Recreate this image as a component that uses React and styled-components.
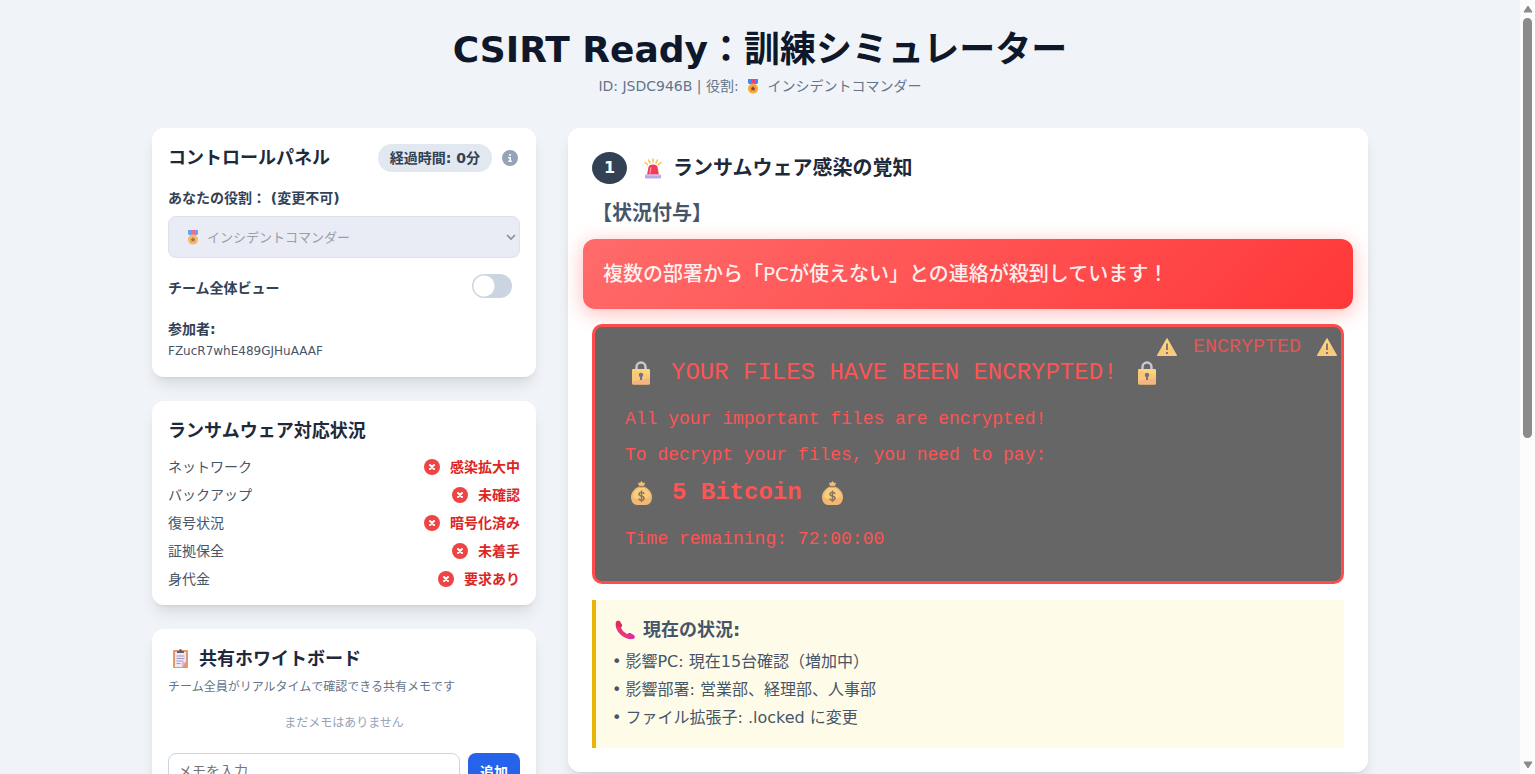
import React from "react";
import styled, { createGlobalStyle } from "styled-components";

const GlobalStyle = createGlobalStyle`
  *, *::before, *::after { box-sizing: border-box; }
  body {
    margin: 0;
    background: #f0f4f8;
    color: #475569;
    font-family: "DejaVu Sans", "Noto Sans CJK JP", sans-serif;
    font-size: 14px;
    line-height: 20px;
  }
  h1, h2, h3, p, ul, dl, dd { margin: 0; padding: 0; }
  button, input, select { font-family: inherit; }
`;

const Shell = styled.div`
  display: flex;
  height: 100vh;
`;

const Viewport = styled.div`
  flex: 1;
  min-width: 0;
  overflow: hidden;
`;

const Track = styled.div`
  flex: none;
  display: flex;
  flex-direction: column;
  align-items: center;
  justify-content: space-between;
  width: 15px;
  padding: 5px 0;
  background: #fcfcfc;
`;

const Thumb = styled.div`
  width: 9px;
  height: 55%;
  margin: 5px 0 auto;
  border-radius: 5px;
  background: #8b8b8b;
`;

const Container = styled.div`
  max-width: 1280px;
  margin: 0 auto;
  padding: 30px 32px;
`;

const Header = styled.header`
  margin-bottom: 32px;
  text-align: center;
`;

const Title = styled.h1`
  margin-bottom: 6px;
  color: #0f172a;
  font-size: 36px;
  font-weight: 700;
  line-height: 40px;
`;

const Subtitle = styled.p`
  color: #64748b;
`;

const Columns = styled.div`
  display: grid;
  grid-template-columns: repeat(3, minmax(0, 1fr));
  align-items: start;
  gap: 32px;
`;

const Sidebar = styled.aside`
  display: flex;
  flex-direction: column;
  gap: 24px;
`;

const Card = styled.section`
  padding: ${({ $roomy }) => ($roomy ? "24px" : "16px")};
  border-radius: 12px;
  background: #fff;
  box-shadow: 0 10px 15px -3px rgba(0, 0, 0, 0.1), 0 4px 6px -4px rgba(0, 0, 0, 0.1);
`;

const MainCard = styled(Card)`
  grid-column: span 2;
`;

const Heading = styled.h2`
  color: #1e293b;
  font-size: 18px;
  font-weight: 700;
  line-height: 28px;
`;

const CardHead = styled.div`
  display: flex;
  align-items: center;
  justify-content: space-between;
  margin-bottom: 16px;
`;

const HeadTools = styled.div`
  display: flex;
  align-items: center;
  gap: 10px;
`;

const Pill = styled.span`
  padding: 4px 12px;
  border-radius: 14px;
  background: #e2e8f0;
  color: #334155;
  font-weight: 700;
`;

const IconButton = styled.button`
  display: flex;
  margin-right: 2px;
  padding: 0;
  border: 0;
  background: none;
  cursor: pointer;
`;

const Label = styled.label`
  display: block;
  color: #334155;
  font-weight: 700;
`;

const SelectBox = styled.div`
  position: relative;
  margin: 8px 0 16px;
  color: #9b9ea5;
`;

const Select = styled.select`
  display: block;
  width: 100%;
  height: 42px;
  padding: 0 12px 0 38px;
  border: 1px solid #dde1ea;
  border-radius: 8px;
  background: #e9ecf4;
  color: inherit;
  font-size: 13px;
  appearance: none;
  opacity: 1;
`;

const SelectMark = styled.span`
  position: absolute;
  top: 0;
  bottom: 0;
  left: ${({ $start }) => ($start ? "15px" : "auto")};
  right: ${({ $start }) => ($start ? "auto" : "4px")};
  display: flex;
  align-items: center;
  opacity: ${({ $start }) => ($start ? 0.75 : 1)};
  pointer-events: none;
`;

const ToggleRow = styled.div`
  display: flex;
  align-items: center;
  justify-content: space-between;
  height: 28px;
  margin-bottom: 17px;
  padding-right: 8px;
`;

const Toggle = styled.input`
  appearance: none;
  width: 40px;
  height: 24px;
  margin: 0 0 4px;
  border-radius: 12px;
  background: radial-gradient(circle at 12px 12px, #fff 10px, #cbd5e1 11px);
  cursor: pointer;
`;

const Participant = styled.p`
  color: #475569;
  font-size: 12px;
  padding-top: 2px;
`;

const StatusList = styled.dl`
  display: grid;
  gap: 8px;
  margin-top: 12px;
`;

const StatusRow = styled.div`
  display: flex;
  align-items: center;
  justify-content: space-between;
`;

const StatusValue = styled.dd`
  display: flex;
  align-items: center;
  gap: 10px;
  color: #dc2626;
  font-weight: 700;
`;

const BoardHeading = styled(Heading)`
  display: flex;
  align-items: center;
  gap: 6px;
`;

const Hint = styled.p`
  margin-top: 4px;
  color: #64748b;
  font-size: 12px;
`;

const EmptyNote = styled.p`
  padding: 16px 0 20px;
  color: #94a3b8;
  font-size: 12px;
  text-align: center;
`;

const MemoForm = styled.form`
  display: flex;
  gap: 8px;
`;

const MemoInput = styled.input`
  flex: 1;
  min-width: 0;
  height: 36px;
  padding: 0 9px;
  border: 1px solid #cbd5e1;
  border-radius: 8px;
  font-size: 14px;
`;

const AddButton = styled.button`
  width: 52px;
  border: 0;
  border-radius: 8px;
  background: #2563eb;
  color: #fff;
  font-size: 14px;
  font-weight: 700;
`;

const StepHead = styled.div`
  display: flex;
  align-items: center;
  gap: 16px;
`;

const StepNumber = styled.span`
  display: grid;
  place-items: center;
  width: 35px;
  height: 32px;
  border-radius: 50%;
  background: #334155;
  color: #fff;
  font-size: 16px;
  font-weight: 700;
`;

const StepTitle = styled.h2`
  display: flex;
  align-items: center;
  gap: 10px;
  color: #1e293b;
  font-size: 20px;
  font-weight: 700;
  line-height: 28px;
`;

const SceneLabel = styled.h3`
  margin: 15px 0 12px;
  color: #475569;
  font-size: 20px;
  font-weight: 700;
  line-height: 28px;
`;

const Alert = styled.p`
  margin: 0 -9px 15px;
  padding: 20px;
  border-radius: 12px;
  background: linear-gradient(135deg, #ff6b6b, #ff3838);
  box-shadow: 0 4px 20px rgba(255, 56, 56, 0.35);
  color: rgba(255, 255, 255, 0.92);
  font-size: 20px;
  font-weight: 500;
  line-height: 30px;
`;

const RansomNote = styled.div`
  position: relative;
  margin-bottom: 16px;
  padding: 30px 30px 28px;
  border: 3px solid #ff4d4d;
  border-radius: 10px;
  background: #666;
  color: #fd5454;
  font-family: "Liberation Mono", monospace;
  font-size: 18px;
`;

const CornerTag = styled.span`
  position: absolute;
  top: 10px;
  right: 4px;
  display: flex;
  align-items: center;
  gap: 16px;
  color: #e05555;
  font-size: 20px;
`;

const RansomLine = styled.p`
  display: flex;
  align-items: center;
  gap: 20px;
  margin-bottom: ${({ $large }) => ($large ? "16px" : "8px")};
  padding-left: ${({ $large }) => ($large ? "6px" : "0")};
  font-size: ${({ $large }) => ($large ? "24px" : "18px")};
  font-weight: ${({ $bold }) => ($bold ? 700 : 400)};
  line-height: ${({ $large }) => ($large ? "32px" : "28px")};

  &:last-child { margin-bottom: 0; }
`;

const Situation = styled.div`
  padding: 16px;
  border-left: 4px solid #eab308;
  background: #fefce8;
`;

const SituationHeading = styled.h3`
  display: flex;
  align-items: center;
  gap: 8px;
  margin-bottom: 4px;
  font-size: 18px;
  font-weight: 700;
  line-height: 28px;
`;

const Facts = styled.ul`
  list-style: none;
  font-size: 16px;
  line-height: 28px;
`;

const Fact = styled.li`
  display: flex;
  gap: 4px;

  &::before { content: "•"; }
`;

const InlineIcon = styled.svg`
  display: inline-block;
  flex: none;
  vertical-align: ${({ $drop }) => ($drop ? "-3px" : "0")};
`;

const Medal = () => (
  <InlineIcon $drop width="20" height="15" viewBox="-3 0 20 15" aria-hidden="true">
    <path d="M2 0h3v5H3L2 4z" fill="#3b8df0" />
    <path d="M5 0h4v5H5z" fill="#f0417c" />
    <path d="M9 0h3v4l-1 1H9z" fill="#3b8df0" />
    <circle cx="7" cy="9.6" r="5" fill="#f9a83a" />
    <path d="M7 6.800l.8 1.900 2.100.1-1.600 1.300.5 2L7 11l-1.800 1.100.5-2-1.600-1.300 2.100-.1z" fill="#7d4533" />
  </InlineIcon>
);

const InfoIcon = () => (
  <InlineIcon width="16" height="16" viewBox="0 0 512 512" aria-hidden="true">
    <path
      fill="#94a3b8"
      d="M256 512A256 256 0 1 0 256 0a256 256 0 1 0 0 512zM216 336h24V272H216c-13.300 0-24-10.700-24-24s10.700-24 24-24h48c13.300 0 24 10.700 24 24v88h8c13.300 0 24 10.700 24 24s-10.700 24-24 24H216c-13.300 0-24-10.700-24-24s10.700-24 24-24zm40-208a32 32 0 1 1 0 64 32 32 0 1 1 0-64z"
    />
  </InlineIcon>
);

const CrossIcon = () => (
  <InlineIcon width="16" height="16" viewBox="0 0 16 16" aria-hidden="true">
    <circle cx="8" cy="8" r="8" fill="#ef4444" />
    <path d="M6 6l4 4M10 6l-4 4" stroke="#fff" strokeWidth="2" strokeLinecap="round" />
  </InlineIcon>
);

const ClipboardIcon = () => (
  <InlineIcon width="25" height="20" viewBox="0 0 25 20" aria-hidden="true">
    <rect x="5" y="1" width="15" height="18" rx="1" fill="#e09a6c" />
    <path d="M7 3h11v10l-4 5H7z" fill="#eee6f3" />
    <path d="M18 13l-4 5v-4q0-1 1-1z" fill="#c9bad8" />
    <path d="M9 4V2h2q0-2 1.500-2T14 2h2v2z" fill="#635d73" />
    <path d="M8.500 7h8M8.500 9.500h8M8.500 12h7M8.500 14.500h4" stroke="#a698bd" />
  </InlineIcon>
);

const SirenIcon = () => (
  <InlineIcon width="20" height="21" viewBox="0 0 20 21" aria-hidden="true">
    <path d="M10 1v3M5.500 2l1.500 3M14.500 2L13 5M2 4.500l2.500 2M18 4.500l-2.500 2" stroke="#f8bd3c" strokeWidth="1.400" strokeLinecap="round" />
    <path d="M4 17L5.500 9Q6 6.500 10 6.500T14.500 9L16 17z" fill="#f43a55" />
    <path d="M7 15l.8-5" stroke="#ff9ca0" strokeWidth="1.300" strokeLinecap="round" />
    <rect x="2" y="16.500" width="16" height="4" rx="1" fill="#bda7e7" />
    <path d="M3 17h14" stroke="#ddd0f6" />
  </InlineIcon>
);

const LockIcon = () => (
  <InlineIcon width="20" height="24" viewBox="0 0 20 24" aria-hidden="true">
    <path d="M5.500 9V6a4.500 4.500 0 0 1 9 0v3" fill="none" stroke="#cbc8d3" strokeWidth="2.400" />
    <rect x="1" y="8" width="18" height="15.500" rx="1.500" fill="#f8c778" />
    <path d="M2.500 8h15q1.500 0 1.500 1.500V14L1 9.500Q1 8 2.500 8z" fill="#fbd578" />
    <path d="M1 20l18-3v5q0 1.500-1.500 1.500h-15Q1 23.500 1 22z" fill="#f5b580" />
    <circle cx="10" cy="14" r="2.200" fill="#776d84" />
    <path d="M9 14h2v5H9z" fill="#776d84" />
  </InlineIcon>
);

const MoneyIcon = () => (
  <InlineIcon width="21" height="24" viewBox="0 0 21 24" aria-hidden="true">
    <path d="M7 1.500l2 .5L10.500 0 12 2l2-.5-1 3.500H8z" fill="#f5c06c" />
    <path d="M7 6h7c4 2 7 6 7 10 0 5-3 8-6 8H6c-3 0-6-3-6-8 0-4 3-8 7-10z" fill="#f1b775" />
    <path d="M7.500 7h6c3.500 2 5.500 5 5.500 8-2 3-14 5-17 1 0-4 2-7 5.500-9z" fill="#f8ce7a" />
    <path d="M7.500 5.500h6" stroke="#a27b66" strokeWidth="1.500" />
    <path d="M13 13q-.5-2-2.500-2T8 13q0 1.600 2.500 2t2.500 2.300q0 1.900-2.500 1.900T8 17.500M10.500 9.500v11.500" fill="none" stroke="#8d735f" strokeWidth="1.500" />
  </InlineIcon>
);

const WarningIcon = () => (
  <InlineIcon width="20" height="18" viewBox="0 0 20 18" aria-hidden="true">
    <path d="M10 .5L19.700 17.500H.3z" fill="#fbc97c" stroke="#fbc97c" strokeLinejoin="round" />
    <path d="M10 1l5 8.500H5z" fill="#fbd47e" />
    <path d="M10 5.500v6.500M10 14v2" stroke="#776d7c" strokeWidth="1.800" />
  </InlineIcon>
);

const PhoneIcon = () => (
  <InlineIcon width="23" height="20" viewBox="-3 0 23 20" aria-hidden="true">
    <path d="M1 2C3 0 4.500.5 5.500 2.500L7 5q.5 1-1 2.300C6.500 10 10 13.500 12.700 14q1.300-1.500 2.300-1l3.500 2q2 1.300.5 3.500C13 22-2 12 1 2z" fill="#e93676" />
    <path d="M12.700 14q1.300-1.500 2.300-1l3.500 2q2 1.300.5 3.500-2.500 1-5.500-.2z" fill="#dc2fa0" />
    <path d="M1 2C3 0 4.500.5 5.500 2.500L7 5q.5 1-1 2.300L1 6z" fill="#d92f5a" />
  </InlineIcon>
);

const Chevron = () => (
  <InlineIcon width="10" height="8" viewBox="0 0 10 8" aria-hidden="true">
    <path d="M1 2l4 4 4-4" fill="none" stroke="#8c8f96" strokeWidth="1.600" />
  </InlineIcon>
);

const Arrow = ({ down }) => (
  <InlineIcon width="10" height="8" viewBox="0 0 10 8" aria-hidden="true">
    <path d={down ? "M1 1h8L5 7z" : "M1 7h8L5 1z"} fill="#8b8b8b" stroke="#8b8b8b" strokeLinejoin="round" />
  </InlineIcon>
);

const statuses = [
  ["ネットワーク", "感染拡大中"],
  ["バックアップ", "未確認"],
  ["復号状況", "暗号化済み"],
  ["証拠保全", "未着手"],
  ["身代金", "要求あり"],
];

const facts = [
  "影響PC: 現在15台確認（増加中）",
  "影響部署: 営業部、経理部、人事部",
  "ファイル拡張子: .locked に変更",
];

export default function App() {
  return (
    <>
      <GlobalStyle />
      <Shell>
        <Viewport>
          <Container>
            <Header>
              <Title>CSIRT Ready：訓練シミュレーター</Title>
              <Subtitle>
                ID: JSDC946B | 役割: <Medal /> インシデントコマンダー
              </Subtitle>
            </Header>
            <Columns>
              <Sidebar>
                <Card>
                  <CardHead>
                    <Heading>コントロールパネル</Heading>
                    <HeadTools>
                      <Pill>経過時間: 0分</Pill>
                      <IconButton type="button" aria-label="情報">
                        <InfoIcon />
                      </IconButton>
                    </HeadTools>
                  </CardHead>
                  <Label htmlFor="role">あなたの役割： (変更不可)</Label>
                  <SelectBox>
                    <Select id="role" disabled defaultValue="commander">
                      <option value="commander">インシデントコマンダー</option>
                    </Select>
                    <SelectMark $start>
                      <Medal />
                    </SelectMark>
                    <SelectMark>
                      <Chevron />
                    </SelectMark>
                  </SelectBox>
                  <ToggleRow>
                    <Label htmlFor="team-view">チーム全体ビュー</Label>
                    <Toggle id="team-view" type="checkbox" />
                  </ToggleRow>
                  <Label as="p">参加者:</Label>
                  <Participant>FZucR7whE489GJHuAAAF</Participant>
                </Card>
                <Card>
                  <Heading>ランサムウェア対応状況</Heading>
                  <StatusList>
                    {statuses.map(([name, value]) => (
                      <StatusRow key={name}>
                        <dt>{name}</dt>
                        <StatusValue>
                          <CrossIcon />
                          {value}
                        </StatusValue>
                      </StatusRow>
                    ))}
                  </StatusList>
                </Card>
                <Card>
                  <BoardHeading>
                    <ClipboardIcon />
                    共有ホワイトボード
                  </BoardHeading>
                  <Hint>チーム全員がリアルタイムで確認できる共有メモです</Hint>
                  <EmptyNote>まだメモはありません</EmptyNote>
                  <MemoForm>
                    <MemoInput type="text" placeholder="メモを入力..." aria-label="メモを入力" />
                    <AddButton type="button">追加</AddButton>
                  </MemoForm>
                </Card>
              </Sidebar>
              <MainCard as="main" $roomy>
                <StepHead>
                  <StepNumber>1</StepNumber>
                  <StepTitle>
                    <SirenIcon />
                    ランサムウェア感染の覚知
                  </StepTitle>
                </StepHead>
                <SceneLabel>【状況付与】</SceneLabel>
                <Alert role="alert">複数の部署から「PCが使えない」との連絡が殺到しています！</Alert>
                <RansomNote>
                  <CornerTag>
                    <WarningIcon />
                    ENCRYPTED
                    <WarningIcon />
                  </CornerTag>
                  <RansomLine $large>
                    <LockIcon />
                    YOUR FILES HAVE BEEN ENCRYPTED!
                    <LockIcon />
                  </RansomLine>
                  <RansomLine>All your important files are encrypted!</RansomLine>
                  <RansomLine>To decrypt your files, you need to pay:</RansomLine>
                  <RansomLine $large $bold>
                    <MoneyIcon />
                    5 Bitcoin
                    <MoneyIcon />
                  </RansomLine>
                  <RansomLine>Time remaining: 72:00:00</RansomLine>
                </RansomNote>
                <Situation>
                  <SituationHeading>
                    <PhoneIcon />
                    現在の状況:
                  </SituationHeading>
                  <Facts>
                    {facts.map((fact) => (
                      <Fact key={fact}>{fact}</Fact>
                    ))}
                  </Facts>
                </Situation>
              </MainCard>
            </Columns>
          </Container>
        </Viewport>
        <Track aria-hidden="true">
          <Arrow />
          <Thumb />
          <Arrow down />
        </Track>
      </Shell>
    </>
  );
}
